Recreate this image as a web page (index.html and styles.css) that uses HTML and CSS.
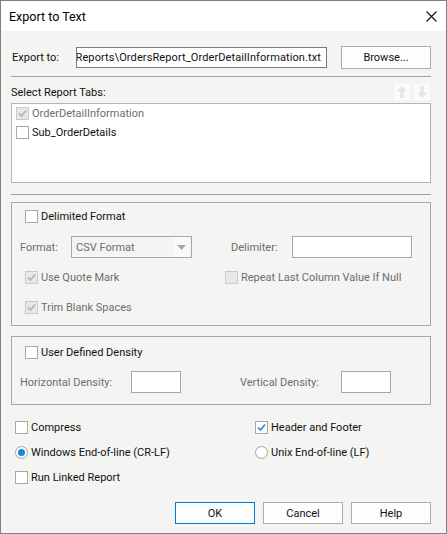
FILE: index.html
```html
<!DOCTYPE html>
<html>
<head>
<meta charset="utf-8">
<link rel="stylesheet" href="styles.css">
</head>
<body>
<div class="window">
  <div class="titlebar">
    <span class="title">Export to Text</span>
    <svg class="close" width="11" height="11" viewBox="0 0 11 11"><path d="M0.5 0.5 L10.5 10.5 M10.5 0.5 L0.5 10.5" stroke="#111" stroke-width="1.1" fill="none"/></svg>
  </div>
  <div class="content">
    <div class="row-export">
      <span class="lbl-export">Export to:</span>
      <div class="path-input"><span>Reports\OrdersReport_OrderDetailInformation.txt</span></div>
      <button class="btn btn-browse">Browse...</button>
    </div>
    <div class="sep sep1"></div>
    <div class="tabs-head">
      <span>Select Report Tabs:</span>
      <div class="arrows">
        <span class="arrow"><svg width="16" height="16" viewBox="0 0 16 16"><path d="M8 2 L13 7.5 L10 7.5 L10 14 L6 14 L6 7.5 L3 7.5 Z" fill="#e6e6e6"/></svg></span>
        <span class="arrow"><svg width="16" height="16" viewBox="0 0 16 16"><path d="M8 14 L13 8.5 L10 8.5 L10 2 L6 2 L6 8.5 L3 8.5 Z" fill="#e6e6e6"/></svg></span>
      </div>
    </div>
    <div class="listbox">
      <div class="item disabled"><span class="cb cb-dis"><svg width="11" height="11" viewBox="0 0 11 11"><path d="M2 5.5 L4.5 8 L9 2.5" stroke="#b4b4b4" stroke-width="1.8" fill="none"/></svg></span><span class="itxt">OrderDetailInformation</span></div>
      <div class="item"><span class="cb"></span><span class="itxt">Sub_OrderDetails</span></div>
    </div>
    <div class="sep sep2"></div>
    <div class="group group1">
      <div class="crow rowA"><span class="cb"></span><span class="ctxt">Delimited Format</span></div>
      <div class="frow rowB">
        <span class="dis lbl-format">Format:</span>
        <div class="combo"><span class="combo-txt">CSV Format</span><span class="combo-btn"><svg width="9" height="5" viewBox="0 0 9 5"><path d="M0 0 L9 0 L4.5 5 Z" fill="#a6a6a6"/></svg></span></div>
        <span class="dis lbl-delim">Delimiter:</span>
        <div class="tbox delim"></div>
      </div>
      <div class="crow rowC">
        <div class="col1"><span class="cb cb-dis"><svg width="11" height="11" viewBox="0 0 11 11"><path d="M2 5.5 L4.5 8 L9 2.5" stroke="#b4b4b4" stroke-width="1.8" fill="none"/></svg></span><span class="ctxt dis">Use Quote Mark</span></div>
        <div class="col2"><span class="cb cb-dis"></span><span class="ctxt dis">Repeat Last Column Value If Null</span></div>
      </div>
      <div class="crow rowD"><span class="cb cb-dis"><svg width="11" height="11" viewBox="0 0 11 11"><path d="M2 5.5 L4.5 8 L9 2.5" stroke="#b4b4b4" stroke-width="1.8" fill="none"/></svg></span><span class="ctxt dis">Trim Blank Spaces</span></div>
    </div>
    <div class="group group2">
      <div class="crow rowE"><span class="cb"></span><span class="ctxt">User Defined Density</span></div>
      <div class="frow rowF">
        <span class="dis lbl-hd">Horizontal Density:</span>
        <div class="tbox dens"></div>
        <span class="dis lbl-vd">Vertical Density:</span>
        <div class="tbox dens"></div>
      </div>
    </div>
    <div class="opts">
      <div class="orow orow1">
        <div class="ocol1"><span class="cb"></span><span class="ctxt">Compress</span></div>
        <div class="ocol2"><span class="cb"><svg width="11" height="11" viewBox="0 0 11 11"><path d="M2 5.5 L4.5 8 L9 2.5" stroke="#1d8ee3" stroke-width="1.7" fill="none"/></svg></span><span class="ctxt">Header and Footer</span></div>
      </div>
      <div class="orow orow2">
        <div class="ocol1"><span class="rb rb-on"><span class="dot"></span></span><span class="ctxt">Windows End-of-line (CR-LF)</span></div>
        <div class="ocol2"><span class="rb"></span><span class="ctxt">Unix End-of-line (LF)</span></div>
      </div>
      <div class="orow orow3">
        <div class="ocol1"><span class="cb"></span><span class="ctxt">Run Linked Report</span></div>
      </div>
    </div>
    <div class="buttons">
      <button class="btn btn-ok">OK</button>
      <button class="btn">Cancel</button>
      <button class="btn">Help</button>
    </div>
  </div>
</div>
</body>
</html>
```
FILE: styles.css
```css
* { box-sizing: border-box; }
html, body { margin: 0; padding: 0; }
body {
  font-family: Roboto, "Open Sans", sans-serif;
  font-size: 11px;
  color: #111;
  background: #f4f4f3;
}
.window {
  width: 447px;
  height: 534px;
  border: 1px solid #808080;
  background: #f4f4f3;
  overflow: hidden;
}
.titlebar {
  height: 30px;
  background: #fff;
  display: flex;
  align-items: center;
  justify-content: space-between;
  padding: 0 9px 0 8px;
}
.title { font-size: 12.5px; color: #000; }
.close { display: block; }
.content {
  padding: 15px 15px 0 10px;
}
.row-export {
  display: flex;
  align-items: center;
  height: 23px;
}
.lbl-export { width: 65px; padding-left: 1px; }
.path-input {
  width: 251px;
  height: 21px;
  border: 1px solid #7a7a7a;
  background: #fff;
  display: flex;
  justify-content: flex-end;
  align-items: center;
  overflow: hidden;
  padding-right: 5px;
  white-space: nowrap;
}
.path-input span { flex: none; letter-spacing: 0.1px; }
.btn {
  font-family: inherit;
  font-size: 11px;
  color: #111;
  background: #fdfdfd;
  border: 1px solid #adadad;
  width: 80px;
  height: 22px;
  padding: 0;
  border-radius: 0;
}
.btn-browse { width: 90px; height: 23px; margin-left: 14px; }
.btn-ok { border-color: #0078d7; }
.sep { height: 1px; background: #a0a0a0; }
.sep1 { margin-top: 7px; }
.sep2 { margin-top: 11px; }
.tabs-head {
  margin-top: 7px;
  height: 16px;
  display: flex;
  align-items: center;
  justify-content: space-between;
}
.arrows { display: flex; gap: 4px; margin-right: 1px; }
.arrow { width: 16px; height: 16px; background: #fbfbfb; display: block; }
.arrow svg { display: block; }
.listbox {
  margin-top: 3px;
  height: 80px;
  border: 1px solid #b4b4b4;
  background: #fff;
  padding: 0 0 0 4px;
}
.item {
  height: 19px;
  display: flex;
  align-items: center;
}
.item.disabled .itxt { color: #6d6d6d; }
.itxt { margin-left: 3px; }
.cb {
  width: 13px;
  height: 13px;
  border: 1px solid #a8a8a8;
  background: #fff;
  display: flex;
  align-items: center;
  justify-content: center;
  flex: none;
}
.cb svg { display: block; }
.cb-dis { background: #e8e8e8; border-color: #cacaca; }
.rb {
  width: 13px;
  height: 13px;
  border: 1px solid #a0a0a0;
  border-radius: 50%;
  background: #fff;
  display: flex;
  align-items: center;
  justify-content: center;
  flex: none;
}
.rb .dot { width: 7px; height: 7px; border-radius: 50%; background: #1a86d9; }
.ctxt { margin-left: 3px; white-space: nowrap; }
.dis { color: #6d6d6d; }
.group {
  border: 1px solid #a8a8a8;
  padding: 0 0 0 8px;
}
.group1 { margin-top: 7px; padding-top: 4px; padding-bottom: 8px; }
.group2 { margin-top: 10px; padding-top: 6px; padding-bottom: 11px; }
.crow {
  height: 19px;
  display: flex;
  align-items: center;
  margin-left: 5px;
}
.crow .col1 { width: 200px; display: flex; align-items: center; }
.crow .col2 { display: flex; align-items: center; }
.frow { height: 22px; display: flex; align-items: center; }
.rowB { margin-top: 10px; }
.rowC { margin-top: 10px; }
.rowD { margin-top: 11px; }
.rowF { margin-top: 9px; }
.lbl-format { width: 51px; }
.combo {
  width: 121px;
  height: 22px;
  border: 1px solid #a8a8a8;
  display: flex;
  align-items: center;
  justify-content: space-between;
  color: #6d6d6d;
}
.combo-txt { padding-left: 4px; }
.combo-btn {
  width: 16px;
  height: 20px;
  margin-right: 2px;
  background: #f9f9f9;
  display: flex;
  align-items: center;
  justify-content: center;
}
.combo-btn svg { display: block; }
.lbl-delim { margin-left: 39px; width: 61px; }
.tbox { height: 22px; border: 1px solid #a8a8a8; background: #fff; }
.delim { width: 120px; }
.dens { width: 50px; }
.lbl-hd { width: 111px; }
.lbl-vd { margin-left: 59px; width: 101px; }
.opts { margin-top: 13px; padding-left: 4px; }
.orow { height: 19px; display: flex; align-items: center; }
.orow2, .orow3 { margin-top: 6px; }
.ocol1 { width: 240px; display: flex; align-items: center; }
.ocol2 { display: flex; align-items: center; }
.buttons {
  margin-top: 15px;
  display: flex;
  justify-content: flex-end;
  gap: 8px;
}
```
